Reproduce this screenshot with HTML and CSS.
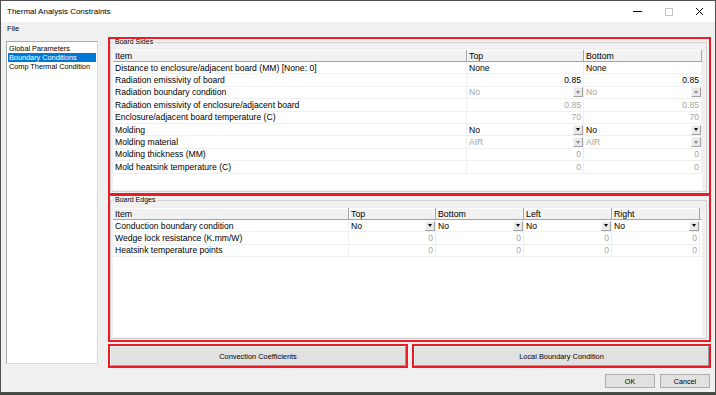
FILE: index.html
```html
<!DOCTYPE html>
<html>
<head>
    <meta charset="utf-8">
    <link rel="stylesheet" href="styles.css">
</head>
<body>
    <div class="window">
        <div class="titlebar">
            <span class="title">Thermal Analysis Constraints</span>
            <div class="caption">
                <span class="cap"><svg width="9" height="9" viewBox="0 0 9 9"><path d="M0 4.5H9" stroke="#000" stroke-width="1"/></svg></span>
                <span class="cap"><svg width="9" height="9" viewBox="0 0 9 9"><rect x="1.5" y="1.5" width="7" height="7" fill="none" stroke="#c4c4c4" stroke-width="1"/></svg></span>
                <span class="cap"><svg width="9" height="9" viewBox="0 0 9 9"><path d="M1 1L8 8M8 1L1 8" stroke="#000" stroke-width="1"/></svg></span>
            </div>
        </div>
        <div class="menubar"><span class="menu-item">File</span></div>

        <div class="main">
            <ul class="tree">
                <li>Global Parameters</li>
                <li class="selected">Boundary Conditions</li>
                <li>Comp Thermal Condition</li>
            </ul>

            <div class="panel">
                <div class="mark sides">
                    <fieldset class="group">
                        <legend>Board Sides</legend>
                        <div class="grid">
                            <div class="row head cols-3"><div>Item</div><div>Top</div><div>Bottom</div></div>
                            <div class="row cols-3">
                                <div>Distance to enclosure/adjacent board (MM) [None: 0]</div>
                                <div>None</div><div>None</div>
                            </div>
                            <div class="row cols-3">
                                <div>Radiation emissivity of board</div>
                                <div class="num">0.85</div><div class="num">0.85</div>
                            </div>
                            <div class="row cols-3">
                                <div>Radiation boundary condition</div>
                                <div class="combo off"><span>No</span><i class="dd"></i></div>
                                <div class="combo off"><span>No</span><i class="dd"></i></div>
                            </div>
                            <div class="row cols-3">
                                <div>Radiation emissivity of enclosure/adjacent board</div>
                                <div class="num off">0.85</div><div class="num off">0.85</div>
                            </div>
                            <div class="row cols-3">
                                <div>Enclosure/adjacent board temperature (C)</div>
                                <div class="num off">70</div><div class="num off">70</div>
                            </div>
                            <div class="row cols-3">
                                <div>Molding</div>
                                <div class="combo"><span>No</span><i class="dd"></i></div>
                                <div class="combo"><span>No</span><i class="dd"></i></div>
                            </div>
                            <div class="row cols-3">
                                <div>Molding material</div>
                                <div class="combo off"><span>AIR</span><i class="dd"></i></div>
                                <div class="combo off"><span>AIR</span><i class="dd"></i></div>
                            </div>
                            <div class="row cols-3">
                                <div>Molding thickness (MM)</div>
                                <div class="num off">0</div><div class="num off">0</div>
                            </div>
                            <div class="row cols-3">
                                <div>Mold heatsink temperature (C)</div>
                                <div class="num off">0</div><div class="num off">0</div>
                            </div>
                        </div>
                    </fieldset>
                </div>

                <div class="mark edges">
                    <fieldset class="group">
                        <legend>Board Edges</legend>
                        <div class="grid">
                            <div class="row head cols-5"><div>Item</div><div>Top</div><div>Bottom</div><div>Left</div><div>Right</div></div>
                            <div class="row cols-5">
                                <div>Conduction boundary condition</div>
                                <div class="combo"><span>No</span><i class="dd"></i></div>
                                <div class="combo"><span>No</span><i class="dd"></i></div>
                                <div class="combo"><span>No</span><i class="dd"></i></div>
                                <div class="combo"><span>No</span><i class="dd"></i></div>
                            </div>
                            <div class="row cols-5">
                                <div>Wedge lock resistance (K.mm/W)</div>
                                <div class="num off">0</div><div class="num off">0</div>
                                <div class="num off">0</div><div class="num off">0</div>
                            </div>
                            <div class="row cols-5">
                                <div>Heatsink temperature points</div>
                                <div class="num off">0</div><div class="num off">0</div>
                                <div class="num off">0</div><div class="num off">0</div>
                            </div>
                        </div>
                    </fieldset>
                </div>

                <div class="actions">
                    <div class="mark act-left"><button class="wide">Convection Coefficients</button></div>
                    <div class="mark act-right"><button class="wide">Local Boundary Condition</button></div>
                </div>
            </div>
        </div>

        <div class="footer">
            <button class="dlg">OK</button>
            <button class="dlg">Cancel</button>
        </div>
    </div>
</body>
</html>
```

FILE: styles.css
```css
* {
    box-sizing: border-box;
}

body {
    margin: 0;
    background: #3e4b3a;
    font-family: "Liberation Sans", Arial, sans-serif;
    color: #000;
}

.window {
    width: 716px;
    height: 393px;
    background: #f0f0f0;
    border: 1px solid #4f4f4f;
    display: flex;
    flex-direction: column;
}

/* title bar */
.titlebar {
    height: 21px;
    flex-shrink: 0;
    background: #fff;
    display: flex;
    align-items: center;
    padding-left: 6px;
    font-size: 8px;
    color: #000;
}

.title {
    flex: 1;
}

.caption {
    display: flex;
    height: 100%;
}

.cap {
    width: 31px;
    display: flex;
    align-items: center;
    justify-content: center;
}

.menubar {
    height: 14px;
    flex-shrink: 0;
    line-height: 14px;
    padding-left: 6px;
    font-size: 7.6px;
}

.menu-item {
    color: #000;
}

/* main area */
.main {
    display: flex;
    height: 332px;
    flex-shrink: 0;
    padding: 1px 0 0 5px;
}

.tree {
    list-style: none;
    margin: 4px 0 0 0;
    padding: 2px 1px;
    width: 92px;
    height: 323px;
    background: #fff;
    border: 1px solid #a9a9a9;
    border-right-color: #dadada;
    border-bottom-color: #dadada;
    font-size: 7.3px;
}

.tree li {
    height: 9px;
    line-height: 9px;
    padding-left: 1px;
}

.tree li.selected {
    background: #0078d7;
    color: #fff;
}

.panel {
    margin-left: 10px;
    width: 603px;
    display: flex;
    flex-direction: column;
}

.mark {
    border: 2px solid #ec1c24;
    flex-shrink: 0;
}

.sides {
    height: 158px;
}

.edges {
    height: 148px;
    margin-top: -1px;
}

.group {
    margin: 0 2px 1px 0;
    padding: 5px 4px 1px 2px;
    border: 1px solid #d2d2d2;
    min-width: 0;
}

.edges .group {
    margin-top: 1px;
}

.group legend {
    padding: 0 2px;
    font-size: 7px;
    line-height: 6px;
    height: 6px;
}

.grid {
    width: 589px;
    height: 140px;
    background: #fff;
}

.edges .grid {
    height: 129px;
}

.row {
    display: grid;
    height: 12.4px;
    font-size: 8.6px;
    border-bottom: 1px solid #f0f0f0;
}

.cols-3 {
    grid-template-columns: 354px 117px 118px;
}

.cols-5 {
    grid-template-columns: 236px 87px 88px 88px 88px;
}

.row > div {
    display: flex;
    align-items: center;
    padding-left: 2px;
    border-right: 1px solid #f0f0f0;
    white-space: nowrap;
    overflow: hidden;
}

.row.head {
    height: 12px;
    font-size: 8.8px;
    background: #f2f2f2;
    border-bottom: 1px solid #a3a3a3;
}

.row.head > div {
    border-right: 1px solid #a3a3a3;
    box-shadow: inset 1px 1px 0 #fff;
}

.row > div.num {
    justify-content: flex-end;
    padding-right: 2px;
}

.off {
    color: #a5a5a5;
}

.combo span {
    flex: 1;
}

.dd {
    width: 10px;
    height: 10px;
    background: #e9e9e9;
    border: 1px solid #f6f6f6;
    border-right-color: #a0a0a0;
    border-bottom-color: #a0a0a0;
    display: flex;
    align-items: center;
    justify-content: center;
}

.dd::after {
    content: "";
    border-left: 2.5px solid transparent;
    border-right: 2.5px solid transparent;
    border-top: 3px solid #000;
}

.combo.off .dd::after {
    border-top-color: #8a8a8a;
}

/* action buttons */
.actions {
    display: flex;
    gap: 4px;
    margin-top: 2px;
    height: 24px;
    flex-shrink: 0;
}

.act-left,
.act-right {
    height: 24px;
}

.act-left {
    width: 300px;
}

.act-right {
    width: 299px;
}

.wide {
    display: block;
    width: 100%;
    height: 20px;
    margin: 0;
    background: #e1e1e1;
    border: 1px solid #f4f4f4;
    border-right-color: #9c9c9c;
    border-bottom-color: #9c9c9c;
    font-family: "Liberation Sans", Arial, sans-serif;
    font-size: 7.4px;
    color: #000;
    padding: 0;
}

/* footer */
.footer {
    display: flex;
    justify-content: flex-end;
    gap: 5px;
    padding: 6px 5px 0 0;
}

.dlg {
    width: 50px;
    height: 14px;
    margin: 0;
    padding: 0;
    background: #e1e1e1;
    border: 1px solid #adadad;
    font-family: "Liberation Sans", Arial, sans-serif;
    font-size: 7.2px;
    color: #000;
}
```
